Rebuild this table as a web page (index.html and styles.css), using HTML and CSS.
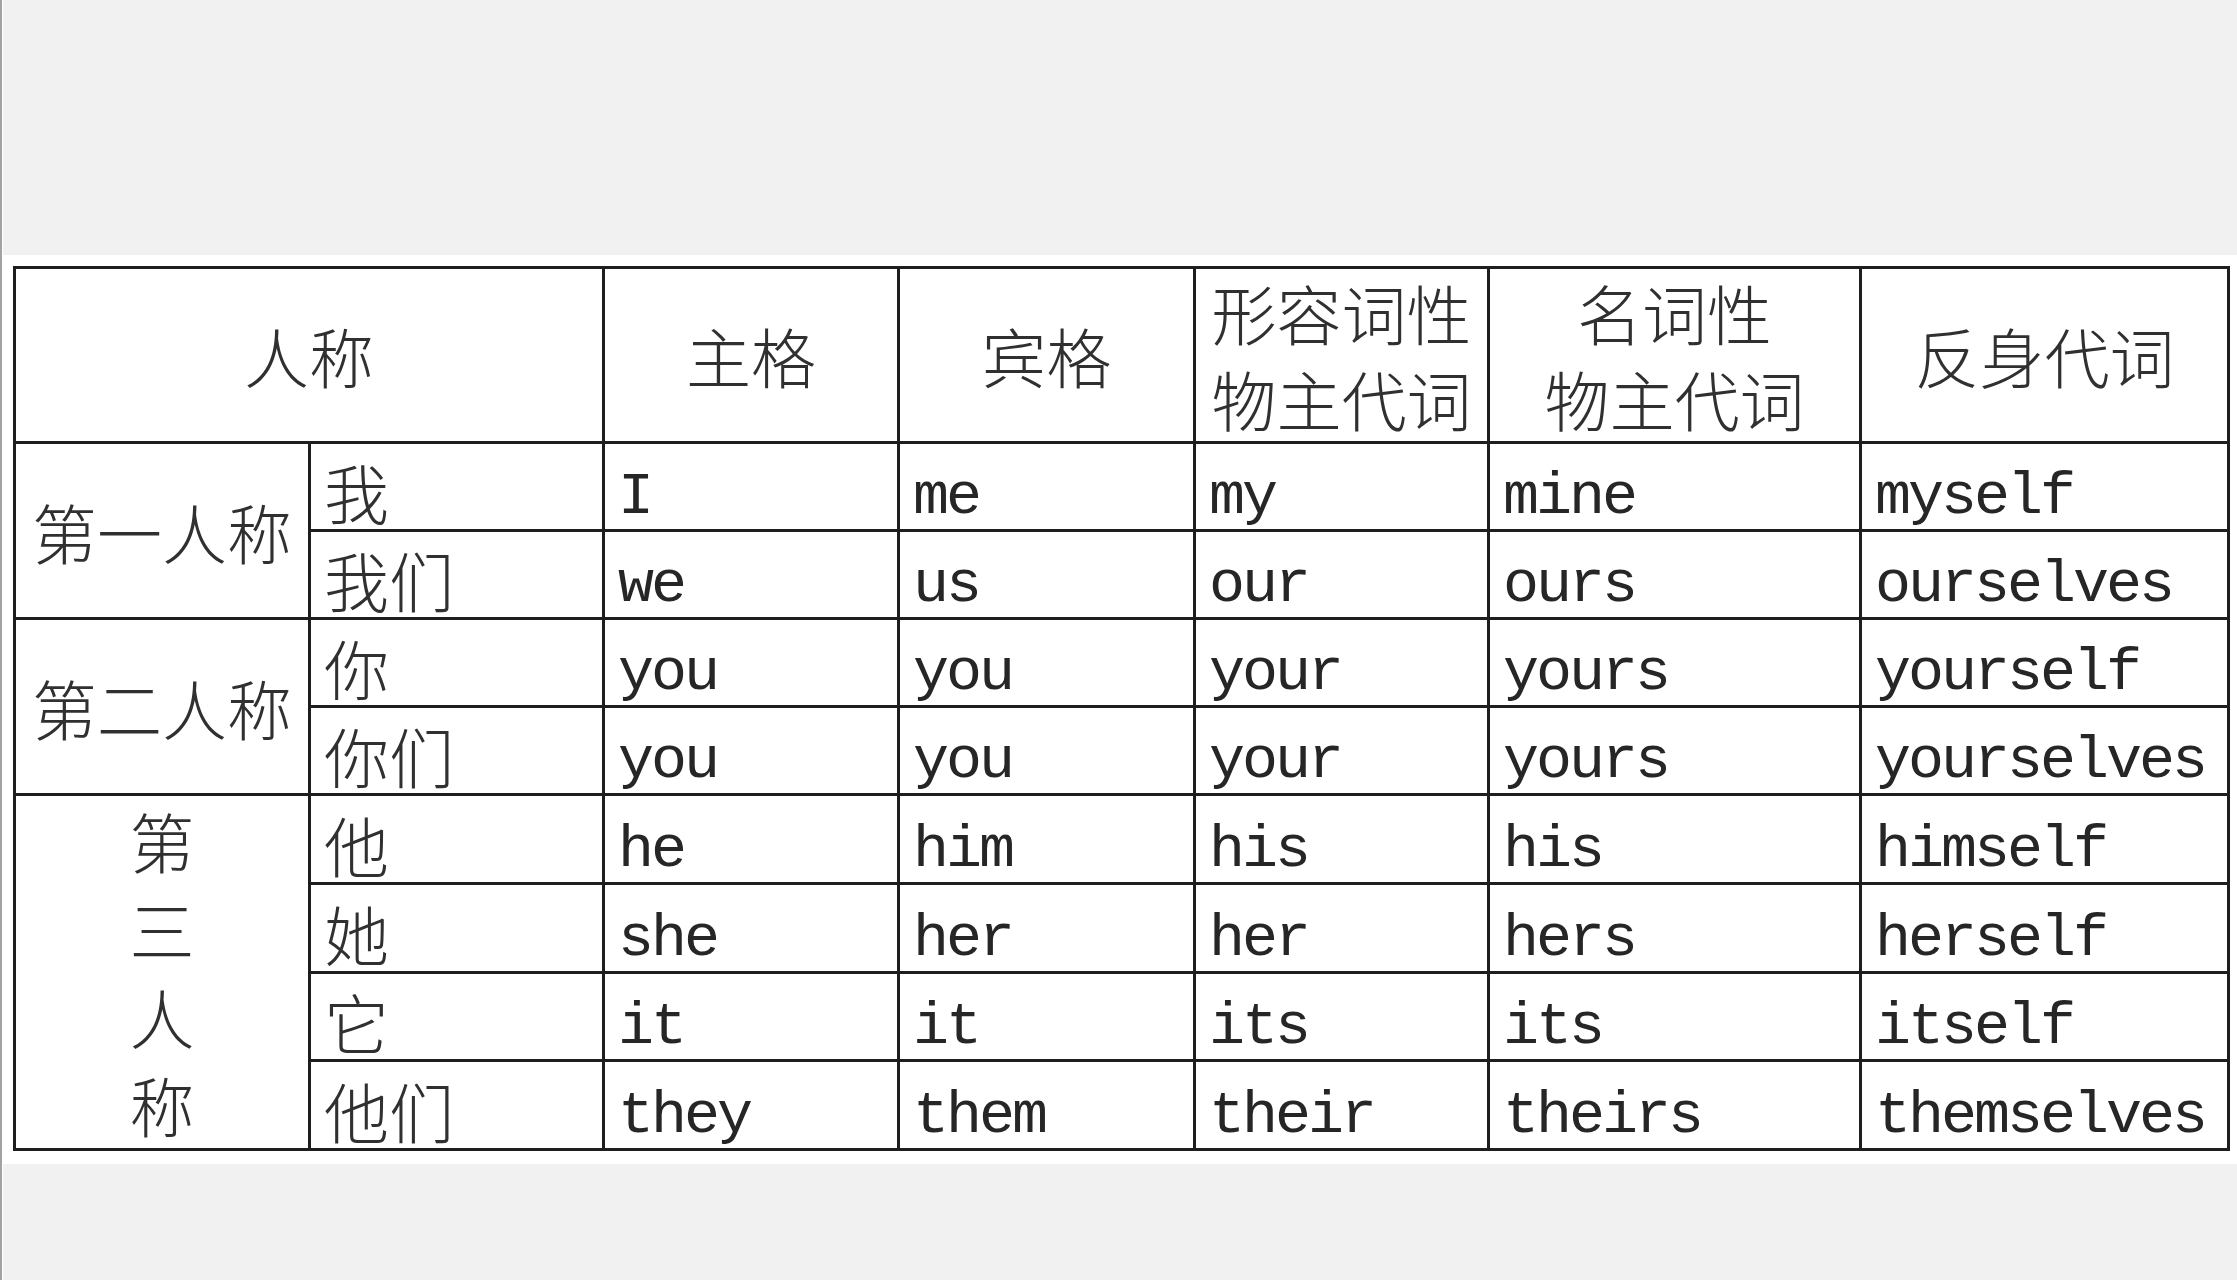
FILE: index.html
```html
<!DOCTYPE html>
<html lang="zh-CN">
<head>
<meta charset="utf-8">
<title>人称代词表</title>
<link rel="stylesheet" href="styles.css">
</head>
<body>
<div class="screen">
  <div class="top"></div>
  <div class="sheet">
    <table class="pron">
      <colgroup>
        <col class="c1"><col class="c2"><col class="c3"><col class="c4"><col class="c5"><col class="c6"><col class="c7">
      </colgroup>
      <thead>
        <tr class="head">
          <th colspan="2">人称</th>
          <th>主格</th>
          <th>宾格</th>
          <th>形容词性<br>物主代词</th>
          <th>名词性<br>物主代词</th>
          <th>反身代词</th>
        </tr>
      </thead>
      <tbody>
        <tr>
          <td rowspan="2" class="group">第一人称</td>
          <td class="zh">我</td>
          <td class="en">I</td><td class="en">me</td><td class="en">my</td><td class="en">mine</td><td class="en">myself</td>
        </tr>
        <tr>
          <td class="zh">我们</td>
          <td class="en">we</td><td class="en">us</td><td class="en">our</td><td class="en">ours</td><td class="en">ourselves</td>
        </tr>
        <tr>
          <td rowspan="2" class="group">第二人称</td>
          <td class="zh">你</td>
          <td class="en">you</td><td class="en">you</td><td class="en">your</td><td class="en">yours</td><td class="en">yourself</td>
        </tr>
        <tr>
          <td class="zh">你们</td>
          <td class="en">you</td><td class="en">you</td><td class="en">your</td><td class="en">yours</td><td class="en">yourselves</td>
        </tr>
        <tr>
          <td rowspan="4" class="group stack">第<br>三<br>人<br>称</td>
          <td class="zh">他</td>
          <td class="en">he</td><td class="en">him</td><td class="en">his</td><td class="en">his</td><td class="en">himself</td>
        </tr>
        <tr>
          <td class="zh">她</td>
          <td class="en">she</td><td class="en">her</td><td class="en">her</td><td class="en">hers</td><td class="en">herself</td>
        </tr>
        <tr>
          <td class="zh">它</td>
          <td class="en">it</td><td class="en">it</td><td class="en">its</td><td class="en">its</td><td class="en">itself</td>
        </tr>
        <tr>
          <td class="zh">他们</td>
          <td class="en">they</td><td class="en">them</td><td class="en">their</td><td class="en">theirs</td><td class="en">themselves</td>
        </tr>
      </tbody>
    </table>
  </div>
  <div class="bottom"></div>
</div>
</body>
</html>
```
FILE: styles.css
```css
html, body {
  margin: 0;
  padding: 0;
  background: #f1f1f1;
}

.screen {
  height: 1280px;
  display: flex;
  flex-direction: column;
  border-left: 2px solid #a2a2a2;
  box-sizing: border-box;
}

.top {
  height: 255px;
  border-left: 1px solid #ffffff;
  flex: none;
}

.sheet {
  background: #ffffff;
  padding: 11px 10px 13px 11px;
  flex: none;
}

.bottom {
  flex: 1;
  border-left: 1px solid #ffffff;
}

.pron {
  border-collapse: collapse;
  table-layout: fixed;
  width: 2214px;
  color: #262626;
}

.pron col.c1 { width: 295px; }
.pron col.c2 { width: 294px; }
.pron col.c3 { width: 295px; }
.pron col.c4 { width: 296px; }
.pron col.c5 { width: 294px; }
.pron col.c6 { width: 372px; }
.pron col.c7 { width: 368px; }

.pron th,
.pron td {
  border: 3px solid #1e1e1e;
  padding: 0;
  white-space: nowrap;
}

.pron tr.head {
  height: 174px;
}

.pron tbody tr {
  height: 88px;
}

.pron th {
  font-family: "Noto Sans CJK SC", "Noto Sans CJK JP", sans-serif;
  font-weight: 300;
  font-size: 65px;
  line-height: 86px;
  text-align: center;
  vertical-align: middle;
  color: #303030;
}

.pron td.group {
  font-family: "Noto Sans CJK SC", "Noto Sans CJK JP", sans-serif;
  font-weight: 300;
  font-size: 65px;
  line-height: 80px;
  text-align: center;
  vertical-align: middle;
  color: #303030;
}

.pron td.stack {
  line-height: 88px;
  white-space: normal;
}

.pron td.zh {
  font-family: "Noto Sans CJK SC", "Noto Sans CJK JP", sans-serif;
  font-weight: 300;
  font-size: 65px;
  line-height: 66px;
  text-align: left;
  vertical-align: bottom;
  padding: 0 10px 5px 13px;
  color: #303030;
}

.pron td.en {
  font-family: "Liberation Mono", "Courier New", monospace;
  font-size: 60px;
  letter-spacing: -3px;
  line-height: 60px;
  text-align: left;
  vertical-align: bottom;
  padding: 0 6px 2px 13px;
  color: #262626;
}
```
